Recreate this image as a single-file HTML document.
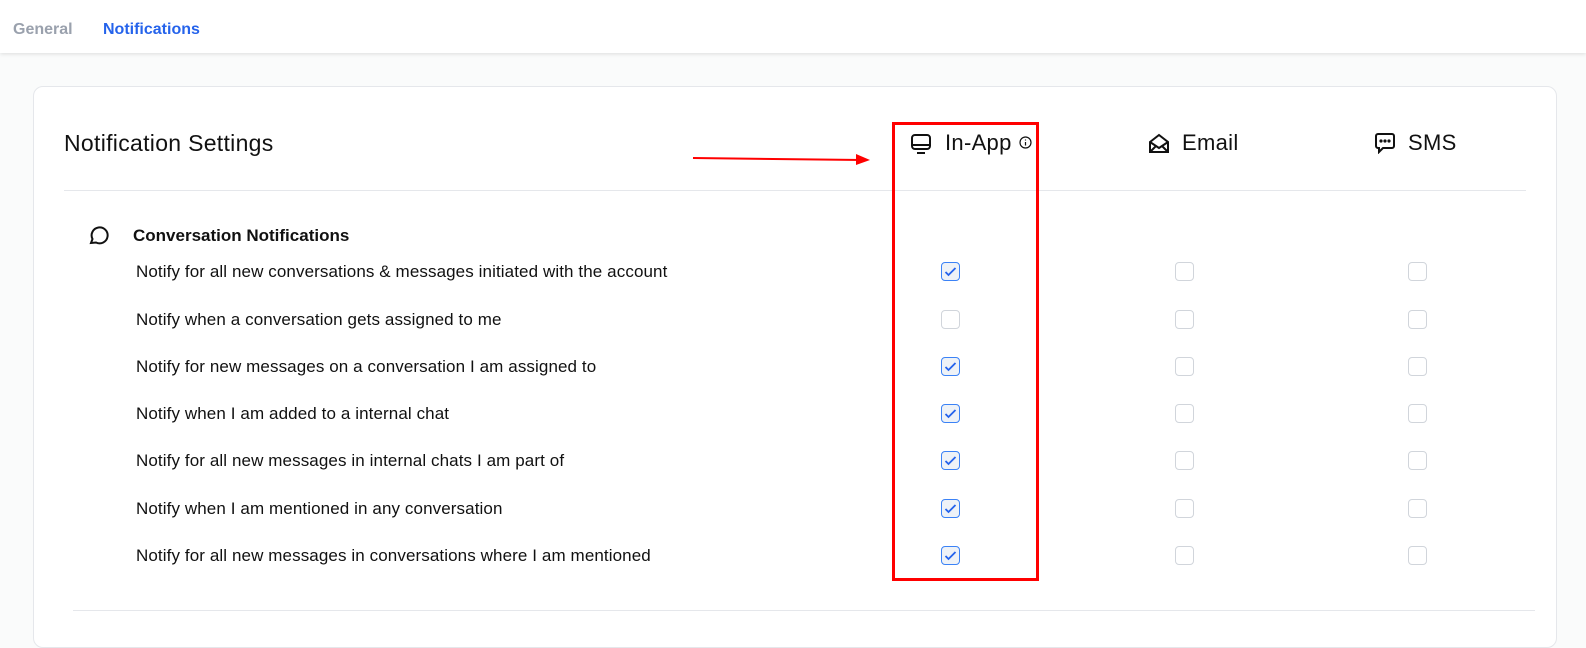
<!DOCTYPE html><html><head><style>
body{margin:0;width:1586px;height:626px;background:#fafbfb;font-family:"Liberation Sans",sans-serif;position:relative;overflow:hidden}
.hdr{position:absolute;left:0;top:0;width:1586px;height:53px;background:#fff;box-shadow:0 1px 4px rgba(0,0,0,.12)}
.tab{position:absolute;top:21px;font-size:16px;font-weight:bold}
.card{position:absolute;left:33px;top:86px;width:1522px;height:560px;background:#fff;border:1px solid #e5e7eb;border-radius:10px}
.a{position:absolute}
.t{font-size:17px;color:#111;position:absolute;left:136px;letter-spacing:0.1px}
.cb{position:absolute;width:19px;height:19px;border:1px solid #d1d5db;border-radius:4px;box-sizing:border-box;background:#fff}
.cb.on{border-color:#3b82f6;background:#eef2f7}
.cb.on svg{position:absolute;left:2px;top:3px}
.h{font-size:22px;color:#111;letter-spacing:0.3px}
</style></head><body>
<div class="hdr"><span class="tab" style="left:13px;color:#9aa1ad">General</span><span class="tab" style="left:103px;color:#2563eb">Notifications</span></div>
<div class="card"></div>
<div class="a h" style="left:64px;top:130px;font-size:23px">Notification Settings</div>
<div class="a" style="left:64px;top:190px;width:1462px;height:1px;background:#e5e7eb"></div>
<div class="a" style="left:73px;top:610px;width:1462px;height:1px;background:#e5e7eb"></div>
<svg class="a" style="left:910px;top:133px" width="22" height="22" viewBox="0 0 22 22" fill="none" stroke="#111" stroke-width="2"><rect x="2" y="2" width="18" height="14" rx="3"/><path d="M2 12h18M7 20h8"/></svg>
<div class="a h" style="left:945px;top:130px">In-App</div>
<svg class="a" style="left:1019px;top:136px" width="13" height="13" viewBox="0 0 13 13" fill="none" stroke="#111" stroke-width="1.2"><circle cx="6.5" cy="6.5" r="5.5"/><path d="M6.5 6v3.5M6.5 3.5v1"/></svg>
<svg class="a" style="left:1147px;top:132px" width="24" height="24" viewBox="0 0 24 24" fill="none" stroke="#111" stroke-width="2"><path d="M3 10l9-7 9 7v10H3z"/><path d="M3 10l9 6 9-6M3 20l6-6M21 20l-6-6"/></svg>
<div class="a h" style="left:1182px;top:130px">Email</div>
<svg class="a" style="left:1374px;top:132px" width="22" height="22" viewBox="0 0 22 22" fill="none" stroke="#111" stroke-width="2"><path d="M4 2h14a2 2 0 0 1 2 2v10a2 2 0 0 1-2 2H9l-4 4v-4H4a2 2 0 0 1-2-2V4a2 2 0 0 1 2-2z"/><circle cx="7" cy="9" r=".6" fill="#111"/><circle cx="11" cy="9" r=".6" fill="#111"/><circle cx="15" cy="9" r=".6" fill="#111"/></svg>
<div class="a h" style="left:1408px;top:130px">SMS</div>
<svg class="a" style="left:87px;top:224px" width="22" height="22" viewBox="0 0 22 22" fill="none" stroke="#111" stroke-width="2"><path d="M4 19l1.5-4A8 8 0 1 1 9 18.5z"/></svg>
<div class="a" style="left:133px;top:226px;font-size:17px;font-weight:bold;color:#111">Conversation Notifications</div>
<div class="t" style="top:262px">Notify for all new conversations &amp; messages initiated with the account</div>
<div class="t" style="top:310px">Notify when a conversation gets assigned to me</div>
<div class="t" style="top:357px">Notify for new messages on a conversation I am assigned to</div>
<div class="t" style="top:404px">Notify when I am added to a internal chat</div>
<div class="t" style="top:451px">Notify for all new messages in internal chats I am part of</div>
<div class="t" style="top:499px">Notify when I am mentioned in any conversation</div>
<div class="t" style="top:546px">Notify for all new messages in conversations where I am mentioned</div>
<div id="cbs"></div>
<script>
var ys=[272,320,367,414,461,509,556],on=[1,0,1,1,1,1,1],h='';
ys.forEach(function(y,i){[951,1185,1418].forEach(function(x,j){var o=(j==0&&on[i]);h+='<div class="cb'+(o?' on':'')+'" style="left:'+(x-10)+'px;top:'+(y-10)+'px">'+(o?'<svg width="13" height="11" viewBox="0 0 13 11" fill="none" stroke="#2563eb" stroke-width="1.8"><path d="M1.5 6l3 3 7-7"/></svg>':'')+'</div>';});});
document.getElementById('cbs').innerHTML=h;
</script>
<div class="a" style="left:892px;top:122px;width:141px;height:453px;border:3px solid #f00"></div>
<svg class="a" style="left:690px;top:150px" width="200" height="20"><line x1="3" y1="8" x2="172" y2="10" stroke="#f00" stroke-width="2"/><path d="M166 4l14 6-14 5z" fill="#f00"/></svg>
</body></html>
